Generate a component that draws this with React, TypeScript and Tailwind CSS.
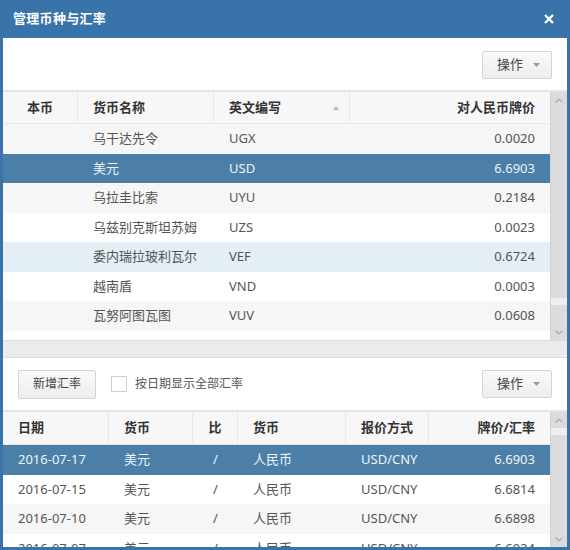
import React from 'react';

const currencies = [
  { name: '乌干达先令', code: 'UGX', rate: '0.0020' },
  { name: '美元', code: 'USD', rate: '6.6903' },
  { name: '乌拉圭比索', code: 'UYU', rate: '0.2184' },
  { name: '乌兹别克斯坦苏姆', code: 'UZS', rate: '0.0023' },
  { name: '委内瑞拉玻利瓦尔', code: 'VEF', rate: '0.6724' },
  { name: '越南盾', code: 'VND', rate: '0.0003' },
  { name: '瓦努阿图瓦图', code: 'VUV', rate: '0.0608' },
];

const history = [
  { date: '2016-07-17', rate: '6.6903' },
  { date: '2016-07-15', rate: '6.6814' },
  { date: '2016-07-10', rate: '6.6898' },
  { date: '2016-07-07', rate: '6.6924' },
];

// row background: selected / hover / striped
function rowClass(i: number, selected: number, hover: number) {
  if (i === selected) return 'bg-[#4b7fa8] text-[#eef4f9]';
  if (i === hover) return 'bg-[#e3eef5] text-[#555]';
  return i % 2 === 0 ? 'bg-[#f6f6f6] text-[#555]' : 'bg-white text-[#555]';
}

function ActionButton() {
  return (
    <button className="h-[28px] w-[70px] flex items-center justify-between pl-[14px] pr-[11px] border border-[#d4d4d4] rounded-[2px] bg-gradient-to-b from-[#fafafa] to-[#ededed] text-[13px] text-[#444]">
      <span>操作</span>
      <svg width="7" height="4" viewBox="0 0 7 4">
        <path d="M0 0h7L3.5 4z" fill="#999" />
      </svg>
    </button>
  );
}

function Scrollbar({ gapTop }: { gapTop: number }) {
  return (
    <div className="relative w-[17px] h-full bg-[#dcdcdc] border-l border-[#d0d0d0]">
      <div className="h-[16px] flex items-center justify-center">
        <svg width="8" height="5" viewBox="0 0 8 5">
          <path d="M0.5 4.5L4 1l3.5 3.5" stroke="#aaa" fill="none" strokeWidth="1.2" />
        </svg>
      </div>
      <div className="absolute left-0 right-0 h-[7px] bg-[#efefef]" style={{ top: gapTop }} />
      <div className="absolute bottom-0 left-0 right-0 h-[16px] flex items-center justify-center">
        <svg width="8" height="5" viewBox="0 0 8 5">
          <path d="M0.5 0.5L4 4l3.5-3.5" stroke="#aaa" fill="none" strokeWidth="1.2" />
        </svg>
      </div>
    </div>
  );
}

export default function App() {
  return (
    <div className="w-[570px] h-[550px] bg-[#3873a9] flex flex-col px-[3px] pb-[3px] font-['Noto_Sans','Noto_Sans_CJK_SC',sans-serif]">
      {/* title bar */}
      <div className="h-[38px] flex items-center justify-between pl-[10px] pr-[13px] text-white">
        <span className="text-[13px] font-bold tracking-[0.3px]">管理币种与汇率</span>
        <svg width="10" height="10" viewBox="0 0 10 10">
          <path d="M1 1l8 8M9 1l-8 8" stroke="#fff" strokeWidth="2.4" />
        </svg>
      </div>

      <div className="flex-1 bg-white flex flex-col overflow-hidden">
        {/* top toolbar */}
        <div className="h-[52px] flex items-center justify-end pr-[15px] pt-[2px]">
          <ActionButton />
        </div>

        {/* currency grid */}
        <div className="h-[250px] flex border-t-2 border-[#e4e4e4]">
          <div className="flex-1 flex flex-col">
            <div className="h-[32px] flex bg-[#f7f7f7] border-b border-[#e8e8e8] text-[13px] font-bold text-[#333]">
              <div className="w-[75px] flex items-center justify-center border-r border-[#e8e8e8]">本币</div>
              <div className="w-[136px] flex items-center pl-[15px] border-r border-[#e8e8e8]">货币名称</div>
              <div className="w-[136px] flex items-center justify-between pl-[15px] pr-[10px] border-r border-[#e8e8e8]">
                <span>英文编写</span>
                <svg width="6" height="4" viewBox="0 0 6 4">
                  <path d="M0 4h6L3 0z" fill="#bbb" />
                </svg>
              </div>
              <div className="flex-1 flex items-center justify-end pr-[15px]">对人民币牌价</div>
            </div>
            {currencies.map((c, i) => (
              <div key={c.code} className={`h-[29.5px] flex items-center text-[13px] ${rowClass(i, 1, 4)}`}>
                <div className="w-[75px]" />
                <div className="w-[136px] pl-[15px]">{c.name}</div>
                <div className="w-[136px] pl-[15px]">{c.code}</div>
                <div className="flex-1 text-right pr-[15px]">{c.rate}</div>
              </div>
            ))}
          </div>
          <Scrollbar gapTop={206} />
        </div>

        {/* splitter */}
        <div className="h-[18px] bg-[#ebebeb] border-t border-b border-[#dcdcdc]" />

        {/* lower toolbar */}
        <div className="h-[52px] flex items-center justify-between pl-[15px] pr-[15px]">
          <div className="flex items-center">
            <button className="h-[29px] w-[78px] border border-[#d4d4d4] rounded-[2px] bg-gradient-to-b from-[#fafafa] to-[#ededed] text-[12px] text-[#444]">
              新增汇率
            </button>
            <div className="ml-[15px] w-[16px] h-[16px] border border-[#cfcfcf] bg-white" />
            <span className="ml-[8px] text-[12px] text-[#555]">按日期显示全部汇率</span>
          </div>
          <ActionButton />
        </div>

        {/* rate history grid */}
        <div className="flex-1 flex border-t-2 border-[#e4e4e4] overflow-hidden">
          <div className="flex-1 flex flex-col">
            <div className="h-[33px] shrink-0 flex bg-[#f7f7f7] border-b border-[#e8e8e8] text-[13px] font-bold text-[#333]">
              <div className="w-[106px] flex items-center pl-[15px] border-r border-[#e8e8e8]">日期</div>
              <div className="w-[84px] flex items-center pl-[15px] border-r border-[#e8e8e8]">货币</div>
              <div className="w-[45px] flex items-center justify-center border-r border-[#e8e8e8]">比</div>
              <div className="w-[108px] flex items-center pl-[15px] border-r border-[#e8e8e8]">货币</div>
              <div className="w-[83px] flex items-center pl-[15px] border-r border-[#e8e8e8]">报价方式</div>
              <div className="flex-1 flex items-center justify-end pr-[15px]">牌价/汇率</div>
            </div>
            {history.map((h, i) => (
              <div key={h.date} className={`h-[29.5px] shrink-0 flex items-center text-[13px] ${rowClass(i, 0, -1).replace('bg-[#f6f6f6]', 'bg-[#f6f6f6]')}`}>
                <div className="w-[106px] pl-[15px]">{h.date}</div>
                <div className="w-[84px] pl-[15px]">美元</div>
                <div className="w-[45px] text-center">/</div>
                <div className="w-[108px] pl-[15px]">人民币</div>
                <div className="w-[83px] pl-[15px]">USD/CNY</div>
                <div className="flex-1 text-right pr-[15px]">{h.rate}</div>
              </div>
            ))}
          </div>
          <Scrollbar gapTop={16} />
        </div>
      </div>
    </div>
  );
}
